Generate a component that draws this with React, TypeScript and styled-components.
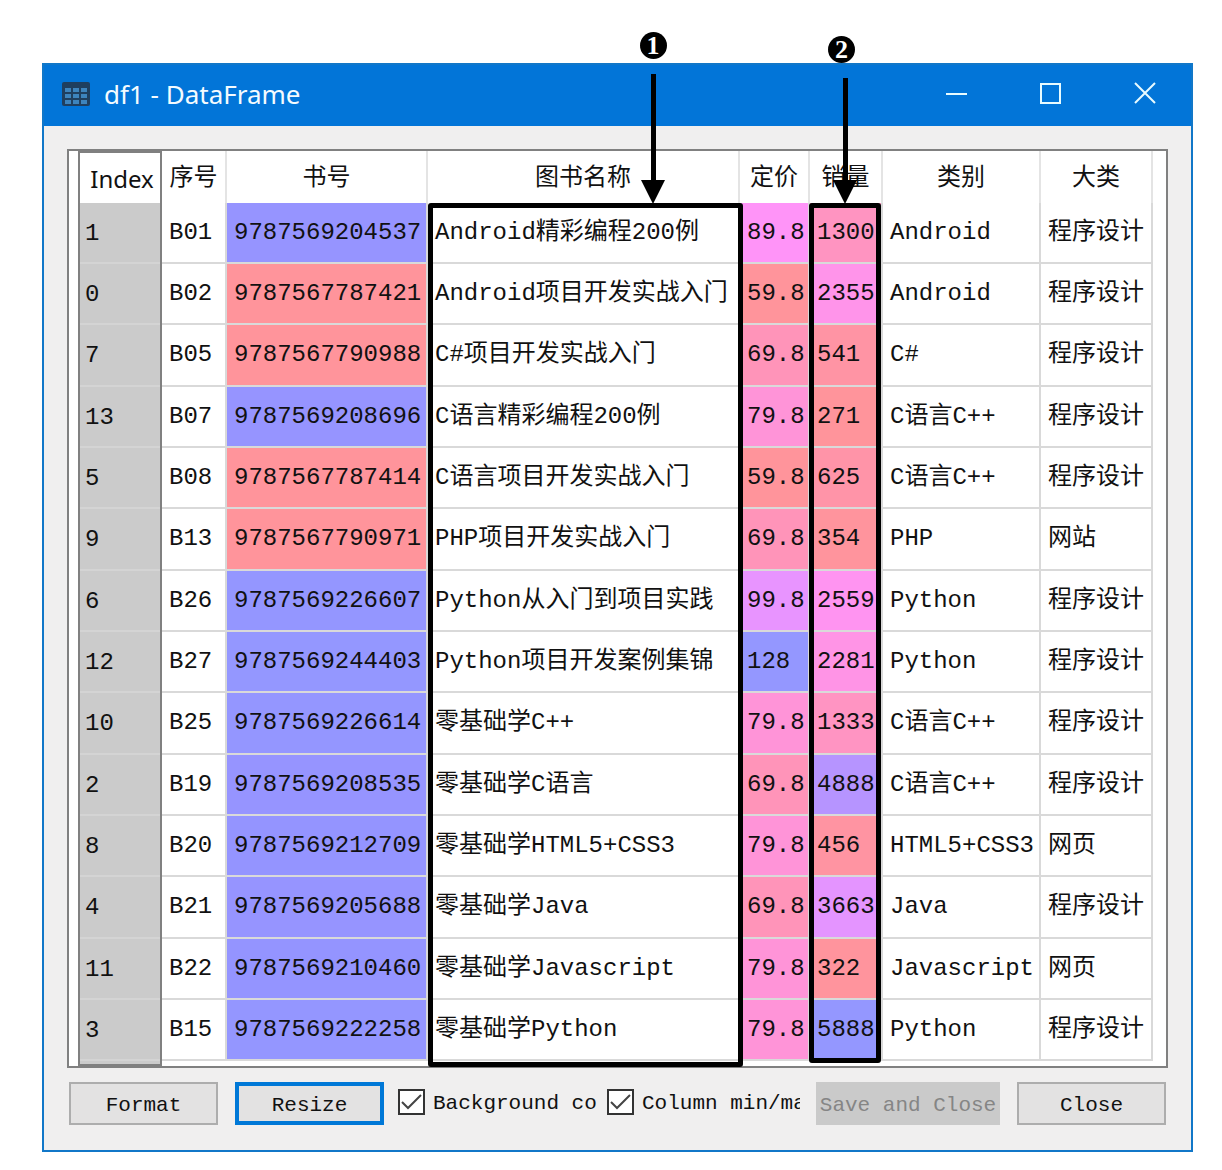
import React from "react";
import styled, { createGlobalStyle, css } from "styled-components";

const MONO = `"Liberation Mono", "Noto Sans CJK SC", monospace`;
const UI = `"Noto Sans", "Noto Sans CJK SC", sans-serif`;
const LINE = "#d9d9d9";
const FRAME = "#808080";
const BLUE = "#0078d7";

const GlobalStyle = createGlobalStyle`
  *, *::before, *::after { box-sizing: border-box; }
  body { margin: 0; background: #fff; color: #111; }
`;

const Page = styled.main`
  padding: 63px 29px 19px 42px;
`;

const Window = styled.section`
  border: 2px solid #1177c8;
  background: #f0efef;
`;

const TitleBar = styled.header`
  display: flex;
  align-items: center;
  height: 61px;
  padding: 0 30px 4px 18px;
  gap: 14px;
  background: #0275d8;
  color: #f4fbff;
`;

const Title = styled.h1`
  flex: 1;
  margin: 0;
  font: 400 26px/32px ${UI};
`;

const WindowButtons = styled.div`
  display: flex;
  gap: 62px;
`;

const WindowButton = styled.button`
  display: flex;
  padding: 0;
  border: 0;
  background: none;
  color: #e8fbff;
`;

const Content = styled.div`
  padding: 23px 23px 25px;
`;

const Frame = styled.div`
  border: 2px solid ${FRAME};
  background: #fff;
  padding: 0 13px 5px 9px;
`;

const TableArea = styled.div`
  position: relative;
`;

const Table = styled.table`
  width: 100%;
  table-layout: fixed;
  border-collapse: separate;
  border-spacing: 0;
  font: 400 24px/30px ${MONO};
`;

const HeadRow = styled.tr`
  height: 52px;
`;

const BodyRow = styled.tr`
  height: 61px;
  &:nth-child(3n) { height: 62px; }
`;

const HeadCell = styled.th`
  padding: 4px 0 0;
  border-right: 2px solid #e4e4e4;
  font-weight: 400;
  text-align: center;
  white-space: nowrap;
`;

const IndexHead = styled(HeadCell)`
  padding: 2px 0 0 4px;
  border: 2px solid ${FRAME};
  border-bottom: 0;
  font-family: ${UI};
`;

const IndexCell = styled.th`
  position: relative;
  padding: 0 0 0 5px;
  border: solid ${FRAME};
  border-width: 0 2px;
  background: #cbcbcb;
  box-shadow: inset 0 -2px #d4d4d4;
  font-weight: 400;
  text-align: left;

  tr:last-child > &::after {
    content: "";
    position: absolute;
    top: 100%;
    left: -2px;
    right: -2px;
    height: 5px;
    border: 2px solid ${FRAME};
    border-top: 0;
    background: #cbcbcb;
  }
`;

const Cell = styled.td<{ $hue?: number }>`
  padding: 0 0 0 7px;
  border-right: 2px solid ${LINE};
  border-bottom: 2px solid ${LINE};
  white-space: nowrap;
  ${({ $hue }) => $hue !== undefined && css`
    background: hsl(${$hue}, 100%, 79%);
    background-clip: padding-box;
  `}
`;

const Highlight = styled.div<{ $from: number; $to: number; $drop: number }>`
  position: absolute;
  top: 52px;
  bottom: ${({ $drop }) => -$drop}px;
  left: calc(100% * ${({ $from }) => $from} / 1075);
  width: calc(100% * ${({ $from, $to }) => $to - $from} / 1075);
  border: 5px solid #000;
  border-radius: 3px;
  pointer-events: none;
`;

const Callout = styled.div<{ $x: number; $height: number }>`
  position: absolute;
  bottom: 100%;
  left: ${({ $x }) => $x}px;
  display: flex;
  flex-direction: column;
  align-items: center;
  width: 28px;
  margin-bottom: 4px;
  height: ${({ $height }) => $height}px;
`;

const Badge = styled.span<{ $shift: number }>`
  display: flex;
  align-items: center;
  justify-content: center;
  flex: none;
  width: 27px;
  height: 27px;
  margin: 0 ${({ $shift }) => $shift}px 15px 0;
  border-radius: 50%;
  background: #000;
  color: #fff;
  font: 700 26px/27px "Liberation Serif", serif;
`;

const Shaft = styled.span`
  flex: 1;
  width: 5px;
  background: #000;
`;

const Head = styled.span`
  border: solid transparent;
  border-width: 24px 12px 0;
  border-top-color: #000;
`;

const Footer = styled.footer`
  display: flex;
  align-items: center;
  padding: 14px 2px 0;
  font: 400 21px/28px ${MONO};
`;

const Push = styled.button<{ $wide?: boolean; $focus?: boolean }>`
  flex: none;
  width: ${({ $wide }) => ($wide ? 184 : 149)}px;
  height: 43px;
  padding: 4px 0 0;
  border: ${({ $focus }) => ($focus ? `4px solid ${BLUE}` : "2px solid #adadad")};
  background: #e3e2e2;
  color: #111;
  font: inherit;
  white-space: nowrap;

  & + & { margin-left: 17px; }
  &:disabled { border-color: #cacaca; background: #cacaca; color: #858585; }
`;

const Options = styled.div`
  display: flex;
  flex: 1;
  gap: 10px;
  min-width: 0;
  margin: 0 15px 0 14px;
`;

const Option = styled.label`
  display: flex;
  align-items: center;
  flex: none;
  gap: 8px;
`;

const OptionText = styled.span<{ $width: number }>`
  width: ${({ $width }) => $width}px;
  overflow: hidden;
  white-space: nowrap;
`;

const Tick = styled.input`
  appearance: none;
  flex: none;
  width: 27px;
  height: 26px;
  margin: 0 0 4px;
  border: 2px solid #333;
  background: #fff;
  &:checked {
    background: #fff
      url("data:image/svg+xml,%3Csvg xmlns='http://www.w3.org/2000/svg' viewBox='0 0 23 22'%3E%3Cpath d='M2 11l6 6L21 4' fill='none' stroke='%23444' stroke-width='2'/%3E%3C/svg%3E")
      center / 23px 22px no-repeat;
  }
`;

const columns = [
  { title: "序号", width: 65 },
  { title: "书号", width: 201 },
  { title: "图书名称", width: 312 },
  { title: "定价", width: 70 },
  { title: "销量", width: 73 },
  { title: "类别", width: 158 },
  { title: "大类", width: 112 },
];

type Book = [number, string, number, string, number, number, string, string];

const books: Book[] = [
  [1, "B01", 9787569204537, "Android精彩编程200例", 89.8, 1300, "Android", "程序设计"],
  [0, "B02", 9787567787421, "Android项目开发实战入门", 59.8, 2355, "Android", "程序设计"],
  [7, "B05", 9787567790988, "C#项目开发实战入门", 69.8, 541, "C#", "程序设计"],
  [13, "B07", 9787569208696, "C语言精彩编程200例", 79.8, 271, "C语言C++", "程序设计"],
  [5, "B08", 9787567787414, "C语言项目开发实战入门", 59.8, 625, "C语言C++", "程序设计"],
  [9, "B13", 9787567790971, "PHP项目开发实战入门", 69.8, 354, "PHP", "网站"],
  [6, "B26", 9787569226607, "Python从入门到项目实践", 99.8, 2559, "Python", "程序设计"],
  [12, "B27", 9787569244403, "Python项目开发案例集锦", 128, 2281, "Python", "程序设计"],
  [10, "B25", 9787569226614, "零基础学C++", 79.8, 1333, "C语言C++", "程序设计"],
  [2, "B19", 9787569208535, "零基础学C语言", 69.8, 4888, "C语言C++", "程序设计"],
  [8, "B20", 9787569212709, "零基础学HTML5+CSS3", 79.8, 456, "HTML5+CSS3", "网页"],
  [4, "B21", 9787569205688, "零基础学Java", 69.8, 3663, "Java", "程序设计"],
  [11, "B22", 9787569210460, "零基础学Javascript", 79.8, 322, "Javascript", "网页"],
  [3, "B15", 9787569222258, "零基础学Python", 79.8, 5888, "Python", "程序设计"],
];

/* Column maximum is blue, column minimum is red. */
function hueScale(values: number[]) {
  const min = Math.min(...values);
  const max = Math.max(...values);
  return (v: number) => Math.round(360 * (0.66 + (0.33 * (max - v)) / (max - min)));
}

const isbnHue = hueScale(books.map((b) => b[2]));
const priceHue = hueScale(books.map((b) => b[4]));
const salesHue = hueScale(books.map((b) => b[5]));

const GridIcon = () => (
  <svg width="28" height="24" viewBox="0 0 28 24" aria-hidden="true">
    <rect width="28" height="24" rx="2" fill="#1f3f5f" />
    {[6, 12, 18].map((y) =>
      [3, 11, 19].map((x) => <rect key={`${x}-${y}`} x={x} y={y} width="6" height="4" fill="#3d84bd" />)
    )}
  </svg>
);

export default function App() {
  return (
    <Page>
      <GlobalStyle />
      <Window>
        <TitleBar>
          <GridIcon />
          <Title>df1 - DataFrame</Title>
          <WindowButtons>
            {[
              ["Minimize", "M1 12h21"],
              ["Maximize", "M2 2h19v19H2z"],
              ["Close window", "M2 1l20 20M22 1L2 21"],
            ].map(([label, d]) => (
              <WindowButton key={label} type="button" aria-label={label}>
                <svg width="32" height="23" viewBox="-4 0 32 23" fill="none" stroke="currentColor" strokeWidth="2">
                  <path d={d} />
                </svg>
              </WindowButton>
            ))}
          </WindowButtons>
        </TitleBar>
        <Content>
          <Frame>
            <TableArea>
              <Table>
                <colgroup>
                  <col style={{ width: 84 }} />
                  {columns.map((c) => (
                    <col key={c.title} style={{ width: c.width }} />
                  ))}
                </colgroup>
                <thead>
                  <HeadRow>
                    <IndexHead scope="col">Index</IndexHead>
                    {columns.map((c) => (
                      <HeadCell key={c.title} scope="col">{c.title}</HeadCell>
                    ))}
                  </HeadRow>
                </thead>
                <tbody>
                  {books.map(([index, id, isbn, name, price, sales, kind, group]) => (
                    <BodyRow key={id}>
                      <IndexCell scope="row">{index}</IndexCell>
                      <Cell>{id}</Cell>
                      <Cell $hue={isbnHue(isbn)}>{isbn}</Cell>
                      <Cell>{name}</Cell>
                      <Cell $hue={priceHue(price)}>{price}</Cell>
                      <Cell $hue={salesHue(sales)}>{sales}</Cell>
                      <Cell>{kind}</Cell>
                      <Cell>{group}</Cell>
                    </BodyRow>
                  ))}
                </tbody>
              </Table>
              <Highlight $from={350} $to={665} $drop={6}>
                <Callout $x={206} $height={172}>
                  <Badge $shift={0}>1</Badge>
                  <Shaft />
                  <Head />
                </Callout>
              </Highlight>
              <Highlight $from={731} $to={803} $drop={2}>
                <Callout $x={17} $height={168}>
                  <Badge $shift={7}>2</Badge>
                  <Shaft />
                  <Head />
                </Callout>
              </Highlight>
            </TableArea>
          </Frame>
          <Footer>
            <Push type="button">Format</Push>
            <Push type="button" $focus>Resize</Push>
            <Options>
              <Option>
                <Tick type="checkbox" defaultChecked />
                <OptionText $width={164}>Background co</OptionText>
              </Option>
              <Option>
                <Tick type="checkbox" defaultChecked />
                <OptionText $width={158}>Column min/ma</OptionText>
              </Option>
            </Options>
            <Push type="button" $wide disabled>Save and Close</Push>
            <Push type="button">Close</Push>
          </Footer>
        </Content>
      </Window>
    </Page>
  );
}
